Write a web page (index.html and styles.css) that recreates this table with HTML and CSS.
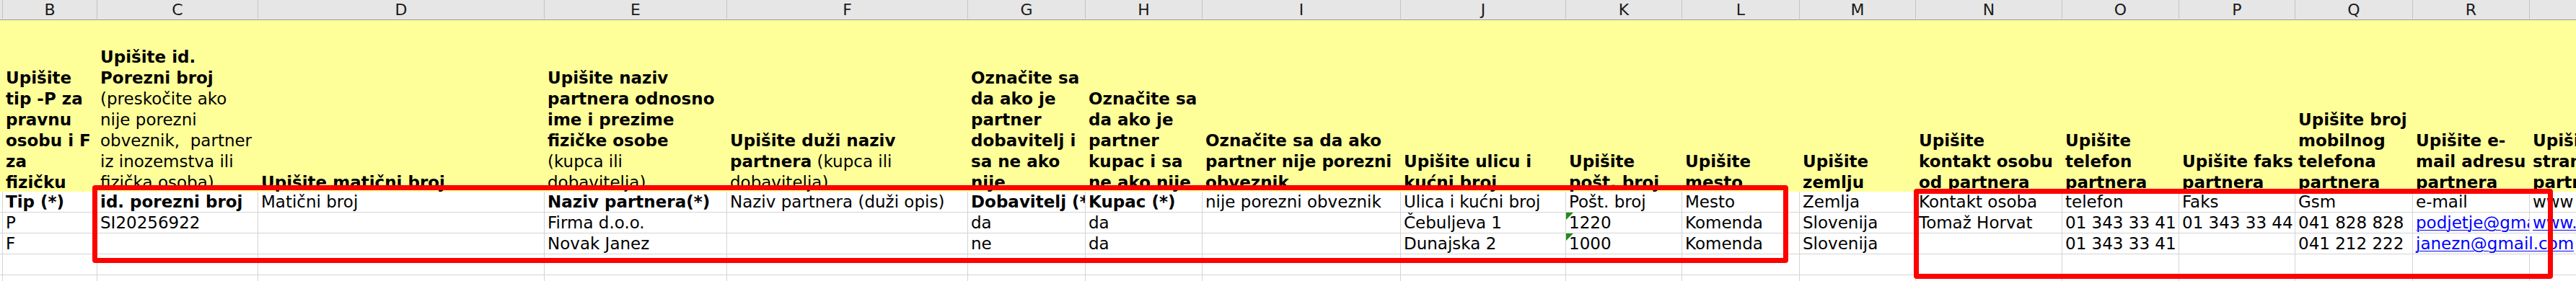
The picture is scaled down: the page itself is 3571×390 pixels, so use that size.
FILE: index.html
```html
<!DOCTYPE html>
<html lang="sl">
<head>
<meta charset="utf-8">
<title>Partnerji</title>
<link rel="stylesheet" href="styles.css">
</head>
<body>
<div class="stage">
  <div class="sheet">
    <!-- column letters -->
    <div class="ch stub"></div>
    <div class="ch">B</div><div class="ch">C</div><div class="ch">D</div><div class="ch">E</div>
    <div class="ch">F</div><div class="ch">G</div><div class="ch">H</div><div class="ch">I</div>
    <div class="ch">J</div><div class="ch">K</div><div class="ch">L</div><div class="ch">M</div>
    <div class="ch">N</div><div class="ch">O</div><div class="ch">P</div><div class="ch">Q</div>
    <div class="ch">R</div><div class="ch">S</div>

    <!-- yellow instruction row -->
    <div class="y stub"></div>
    <div class="y"><div class="t"><b>Upišite<br>tip -P za<br>pravnu<br>osobu i F<br>za<br>fizičku</b></div></div>
    <div class="y"><div class="t"><b>Upišite id.<br>Porezni broj</b><br>(preskočite ako<br>nije porezni<br>obveznik,&nbsp; partner<br>iz inozemstva ili<br>fizička osoba)</div></div>
    <div class="y"><div class="t"><b>Upišite matični broj</b></div></div>
    <div class="y"><div class="t"><b>Upišite naziv<br>partnera odnosno<br>ime i prezime<br>fizičke osobe</b><br>(kupca ili<br>dobavitelja)</div></div>
    <div class="y"><div class="t"><b>Upišite duži naziv<br>partnera</b> (kupca ili<br>dobavitelja)</div></div>
    <div class="y"><div class="t"><b>Označite sa<br>da ako je<br>partner<br>dobavitelj i<br>sa ne ako<br>nije</b></div></div>
    <div class="y"><div class="t"><b>Označite sa<br>da ako je<br>partner<br>kupac i sa<br>ne ako nije</b></div></div>
    <div class="y"><div class="t"><b>Označite sa da ako<br>partner nije porezni<br>obveznik</b></div></div>
    <div class="y"><div class="t"><b>Upišite ulicu i<br>kućni broj</b></div></div>
    <div class="y"><div class="t"><b>Upišite<br>pošt. broj</b></div></div>
    <div class="y"><div class="t"><b>Upišite<br>mesto</b></div></div>
    <div class="y"><div class="t"><b>Upišite<br>zemlju</b></div></div>
    <div class="y"><div class="t"><b>Upišite<br>kontakt osobu<br>od partnera</b></div></div>
    <div class="y"><div class="t"><b>Upišite<br>telefon<br>partnera</b></div></div>
    <div class="y"><div class="t"><b>Upišite faks<br>partnera</b></div></div>
    <div class="y"><div class="t"><b>Upišite broj<br>mobilnog<br>telefona<br>partnera</b></div></div>
    <div class="y"><div class="t"><b>Upišite e-<br>mail adresu<br>partnera</b></div></div>
    <div class="y"><div class="t"><b>Upišite<br>stranicu<br>partnera</b></div></div>

    <!-- field names row -->
    <div class="c stub"></div>
    <div class="c"><b>Tip (*)</b></div>
    <div class="c"><b>id. porezni broj</b></div>
    <div class="c">Matični broj</div>
    <div class="c"><b>Naziv partnera(*)</b></div>
    <div class="c">Naziv partnera (duži opis)</div>
    <div class="c"><b>Dobavitelj (*)</b></div>
    <div class="c"><b>Kupac (*)</b></div>
    <div class="c">nije porezni obveznik</div>
    <div class="c">Ulica i kućni broj</div>
    <div class="c">Pošt. broj</div>
    <div class="c">Mesto</div>
    <div class="c">Zemlja</div>
    <div class="c">Kontakt osoba</div>
    <div class="c">telefon</div>
    <div class="c">Faks</div>
    <div class="c">Gsm</div>
    <div class="c">e-mail</div>
    <div class="c">www</div>

    <!-- row P -->
    <div class="c stub"></div>
    <div class="c">P</div>
    <div class="c">SI20256922</div>
    <div class="c"></div>
    <div class="c">Firma d.o.o.</div>
    <div class="c"></div>
    <div class="c">da</div>
    <div class="c">da</div>
    <div class="c"></div>
    <div class="c">Čebuljeva 1</div>
    <div class="c txtnum">1220</div>
    <div class="c">Komenda</div>
    <div class="c">Slovenija</div>
    <div class="c">Tomaž Horvat</div>
    <div class="c">01 343 33 41</div>
    <div class="c">01 343 33 44</div>
    <div class="c">041 828 828</div>
    <div class="c"><span class="lnk">podjetje@gmail.com</span></div>
    <div class="c"><span class="lnk">www.podjetje.si</span></div>

    <!-- row F -->
    <div class="c stub"></div>
    <div class="c">F</div>
    <div class="c"></div>
    <div class="c"></div>
    <div class="c">Novak Janez</div>
    <div class="c"></div>
    <div class="c">ne</div>
    <div class="c">da</div>
    <div class="c"></div>
    <div class="c">Dunajska 2</div>
    <div class="c txtnum">1000</div>
    <div class="c">Komenda</div>
    <div class="c">Slovenija</div>
    <div class="c"></div>
    <div class="c">01 343 33 41</div>
    <div class="c"></div>
    <div class="c">041 212 222</div>
    <div class="c span2"><span class="lnk">janezn@gmail.com</span></div>

    <!-- empty rows -->
    <div class="c stub"></div>
    <div class="c"></div><div class="c"></div><div class="c"></div><div class="c"></div><div class="c"></div><div class="c"></div>
    <div class="c"></div><div class="c"></div><div class="c"></div><div class="c"></div><div class="c"></div><div class="c"></div>
    <div class="c"></div><div class="c"></div><div class="c"></div><div class="c"></div><div class="c"></div><div class="c"></div>

    <div class="c stub"></div>
    <div class="c"></div><div class="c"></div><div class="c"></div><div class="c"></div><div class="c"></div><div class="c"></div>
    <div class="c"></div><div class="c"></div><div class="c"></div><div class="c"></div><div class="c"></div><div class="c"></div>
    <div class="c"></div><div class="c"></div><div class="c"></div><div class="c"></div><div class="c"></div><div class="c"></div>
  </div>

  <div class="mark mark-left"></div>
  <div class="mark mark-right"></div>
</div>
</body>
</html>
```

FILE: styles.css
```css
html, body {
  margin: 0;
  padding: 0;
  background: #ffffff;
  overflow: hidden;
}

.stage {
  position: relative;
  width: 3571px;
  height: 390px;
  overflow: hidden;
  font-family: "DejaVu Sans", Verdana, sans-serif;
  font-size: 23px;
  color: #000000;
}

.sheet {
  display: grid;
  grid-template-columns: 4px 131px 223px 397px 253px 334px 163px 162px 275px 229px 161px 163px 161px 203px 162px 161px 163px 162px 200px;
  grid-template-rows: 28px 238px 29px 29px 29px 29px 29px;
}

/* column letters */
.ch {
  background: #e6e6e6;
  border-right: 1px solid #c4c4c4;
  border-bottom: 1px solid #9e9e9e;
  font-size: 22px;
  line-height: 27px;
  text-align: center;
  color: #1a1a1a;
  box-sizing: border-box;
}

/* yellow instruction cells */
.y {
  background: #ffff99;
  display: flex;
  flex-direction: column;
  justify-content: flex-end;
  overflow: hidden;
  padding: 0 0 0 4px;
  box-sizing: border-box;
}
.y .t {
  line-height: 29px;
  white-space: nowrap;
  margin-bottom: -1.5px;
}

/* regular cells */
.c {
  border-right: 1px solid #d4d4d4;
  border-bottom: 1px solid #d4d4d4;
  line-height: 28px;
  padding: 0 0 0 4px;
  white-space: nowrap;
  overflow: hidden;
  box-sizing: border-box;
  position: relative;
}

.stub {
  padding: 0;
}

.span2 {
  grid-column: span 2;
}

.lnk {
  color: #0000ff;
  text-decoration: underline;
  text-decoration-thickness: 1px;
  text-underline-offset: 2px;
}

/* green "number stored as text" marker */
.txtnum::before {
  content: "";
  position: absolute;
  left: 0;
  top: 0;
  width: 0;
  height: 0;
  border-top: 10px solid #1f8a1f;
  border-right: 10px solid transparent;
}

/* red highlight rectangles */
.mark {
  position: absolute;
  border: 7px solid #ff0000;
  border-radius: 4px;
  box-sizing: border-box;
}
.mark-left {
  left: 128px;
  top: 257px;
  width: 2351px;
  height: 108px;
}
.mark-right {
  left: 2653px;
  top: 262px;
  width: 886px;
  height: 125px;
}
```
